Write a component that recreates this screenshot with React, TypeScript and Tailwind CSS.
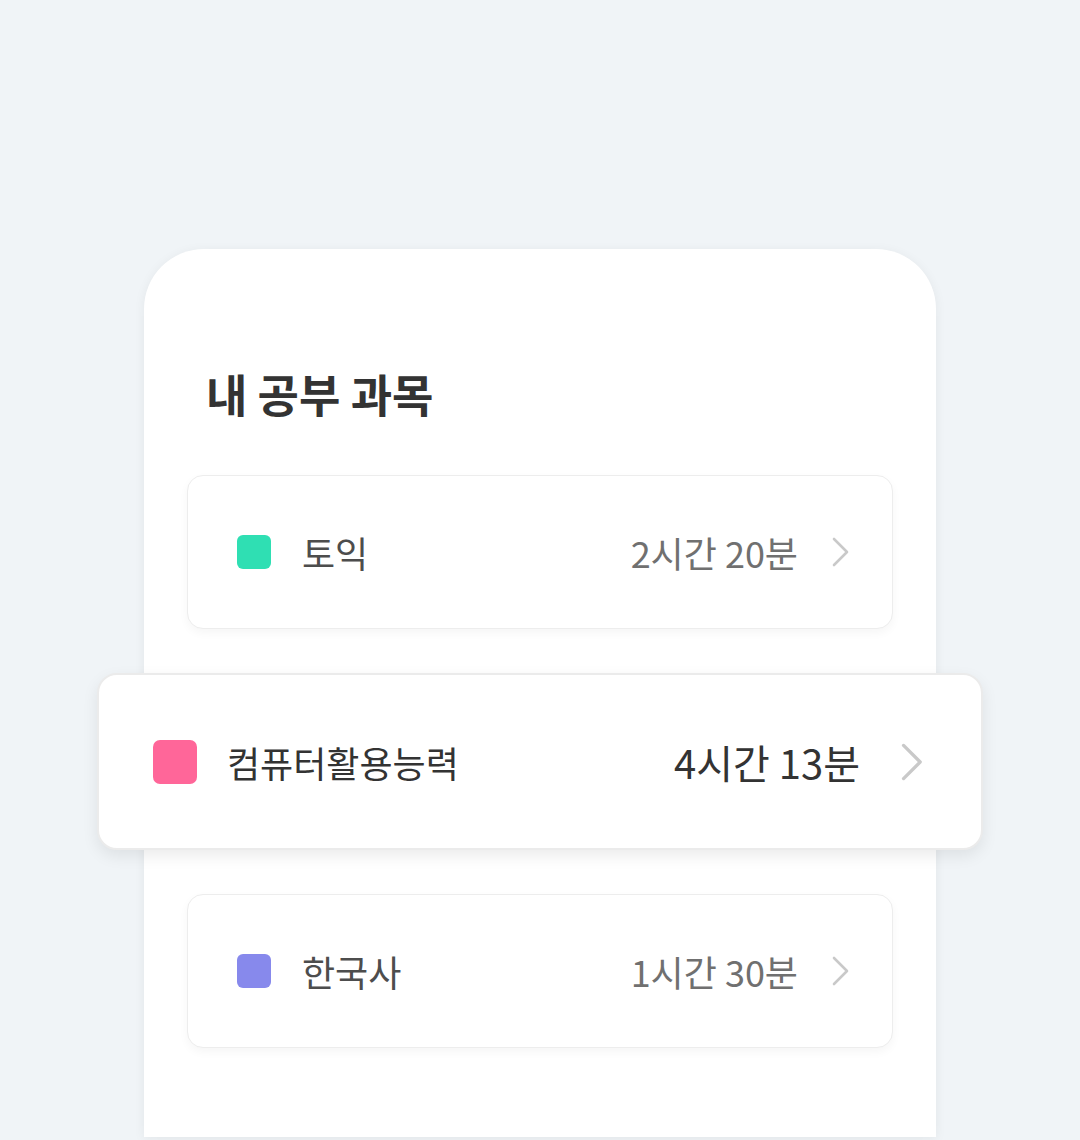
import React from "react";

const font = { fontFamily: '"Noto Sans CJK KR", "Noto Sans", sans-serif' };

function Chevron({ className }: { className: string }) {
  return (
    <svg viewBox="0 0 18 30" className={className} fill="none">
      <polyline points="2,2 15,15 2,28" stroke="#c9c9c9" strokeWidth="2.6" strokeLinecap="round" strokeLinejoin="round" />
    </svg>
  );
}

function Item({ color, name, time }: { color: string; name: string; time: string }) {
  return (
    <div className="flex h-[154px] items-center rounded-[16px] border border-[#ededed] bg-white pl-[49px] pr-[42px] shadow-[0_4px_10px_rgba(0,0,0,0.04)]">
      <div className="h-[34px] w-[34px] rounded-[6px]" style={{ backgroundColor: color }} />
      <div className="ml-[31px] flex-1 text-[36px] leading-none text-[#4d4d4d]">{name}</div>
      <div className="text-[36px] leading-none text-[#707070]">{time}</div>
      <Chevron className="ml-[34px] h-[30px] w-[18px]" />
    </div>
  );
}

export default function App() {
  return (
    <div className="min-h-[1140px] w-[1080px] overflow-hidden bg-[#f0f4f7] pt-[249px]" style={font}>
      <div className="ml-[144px] h-[888px] w-[792px] rounded-t-[60px] bg-white px-[43px] pt-[121px] shadow-[0_2px_12px_rgba(0,0,0,0.06)]">
        <h1 className="pl-[19px] text-[45px] font-bold leading-[48px] text-[#333333]">내 공부 과목</h1>
        <div className="mt-[57px] flex flex-col gap-[44px]">
          <Item color="#2fdfb3" name="토익" time="2시간 20분" />
          <div className="mx-[-90px] flex h-[177px] items-center rounded-[20px] border-2 border-[#ebebeb] bg-white pl-[54px] pr-[57px] shadow-[0_6px_16px_rgba(0,0,0,0.08)]">
            <div className="h-[44px] w-[44px] rounded-[7px] bg-[#ff6699]" />
            <div className="ml-[30px] flex-1 text-[36px] leading-none text-[#333333]">컴퓨터활용능력</div>
            <div className="text-[40px] leading-none text-[#333333]">4시간 13분</div>
            <Chevron className="ml-[41px] h-[40px] w-[23px]" />
          </div>
          <Item color="#8789ec" name="한국사" time="1시간 30분" />
        </div>
      </div>
    </div>
  );
}
